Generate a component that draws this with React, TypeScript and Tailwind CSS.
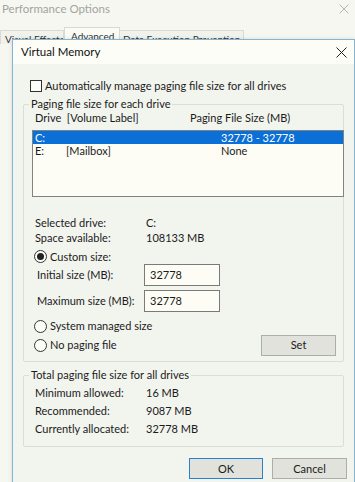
import { ReactNode } from "react";

const font = { fontFamily: 'Lato, "Noto Sans", "Liberation Sans", sans-serif' };

function Radio({ checked, label }: { checked?: boolean; label: string }) {
  return (
    <div className="flex items-center gap-[3px]">
      <span className="w-[13px] h-[13px] rounded-full border border-[#333] bg-[#fdfdf7] flex items-center justify-center">
        {checked && <span className="w-[7px] h-[7px] rounded-full bg-[#222]" />}
      </span>
      <span>{label}</span>
    </div>
  );
}

function Group({ title, children, className }: { title: string; children: ReactNode; className?: string }) {
  return (
    <fieldset className={`border border-[#dcddd6] rounded-[2px] ml-[10px] w-[321px] ${className ?? ""}`}>
      <legend className="ml-[5px] px-[2px] leading-[14px] h-[14px]">{title}</legend>
      {children}
    </fieldset>
  );
}

function InfoRow({ label, value, h = "h-[15px]" }: { label: string; value: string; h?: string }) {
  return (
    <div className={`flex items-center ${h}`}>
      <span className="w-[111px]">{label}</span>
      <span>{value}</span>
    </div>
  );
}

export default function App() {
  return (
    <div
      className="relative w-[355px] h-[482px] overflow-hidden bg-[#f6f7f1] text-[11px] leading-[14px] text-[#1b1b1b]"
      style={font}
    >
      {/* window behind */}
      <div className="flex items-center justify-between h-[17px] pl-[2px] pr-[6px] text-[11.5px] text-[#a3a4a0]">
        <span>Performance Options</span>
        <svg width="10" height="10" viewBox="0 0 10 10" className="mt-[1px]">
          <path d="M0.5 0.5 L9.5 9.5 M9.5 0.5 L0.5 9.5" stroke="#b5b6b2" strokeWidth="1" />
        </svg>
      </div>
      <div className="flex items-end h-[27px] text-[10px] text-[#333] whitespace-nowrap">
        <div className="h-[14px] w-[64px] border border-b-0 border-[#d9dad4] bg-[#f1f2ec] pl-[4px] pt-[1px] leading-[14px] overflow-hidden">
          Visual Effects
        </div>
        <div className="h-[17px] w-[56px] border border-b-0 border-[#d9dad4] bg-[#fbfbf6] pl-[6px] pt-[1px] leading-[14px] overflow-hidden">
          Advanced
        </div>
        <div className="h-[14px] w-[124px] border border-b-0 border-l-0 border-[#d9dad4] bg-[#f1f2ec] pl-[3px] pt-[1px] leading-[14px] overflow-hidden">
          Data Execution Prevention
        </div>
      </div>

      {/* Virtual Memory dialog */}
      <div className="absolute left-[12px] top-[39px] w-[343px] h-[450px] border border-[#86b5d3] bg-[#f2f4ee] shadow-[0_0_4px_rgba(0,0,0,0.12)]">
        <div className="flex items-center justify-between h-[24px] bg-[#fcfdf7] pl-[8px] pr-[7px] text-[11.5px] text-[#111]">
          <span>Virtual Memory</span>
          <svg width="11" height="11" viewBox="0 0 11 11">
            <path d="M0.5 0.5 L10.5 10.5 M10.5 0.5 L0.5 10.5" stroke="#222" strokeWidth="1" />
          </svg>
        </div>

        <div className="flex items-center gap-[3px] mt-[15px] ml-[17px] h-[14px]">
          <span className="w-[12px] h-[12px] border border-[#333] bg-[#fdfdf7]" />
          <span>Automatically manage paging file size for all drives</span>
        </div>

        <Group title="Paging file size for each drive" className="mt-[4px] pb-[6px]">
          <div className="flex items-center h-[14px] pl-[11px]">
            <span className="w-[155px]">Drive&nbsp; [Volume Label]</span>
            <span>Paging File Size (MB)</span>
          </div>
          <div className="mt-[5px] ml-[8px] -mr-[1px] h-[67px] border border-[#828282] bg-[#fdfdf6] leading-[13px]">
            <div className="flex items-center h-[13px] bg-[#0a6fd6] text-white pl-[2px]">
              <span className="w-[186px]">C:</span>
              <span>32778 - 32778</span>
            </div>
            <div className="flex items-center h-[13px] pl-[2px]">
              <span className="w-[31px]">E:</span>
              <span className="w-[155px]">[Mailbox]</span>
              <span>None</span>
            </div>
          </div>

          <div className="mt-[18px] pl-[11px]">
            <InfoRow label="Selected drive:" value="C:" />
            <InfoRow label="Space available:" value="108133 MB" />
          </div>

          <div className="mt-[5px] pl-[10px]">
            <div className="h-[13px] flex items-center">
              <Radio checked label="Custom size:" />
            </div>
            <div className="flex items-center mt-[1px] h-[22px] pl-[3px]">
              <span className="w-[107px]">Initial size (MB):</span>
              <div className="w-[76px] h-[22px] border border-[#7a7a7a] bg-[#fdfdf6] pl-[5px] flex items-center">32778</div>
            </div>
            <div className="flex items-center mt-[4px] h-[22px] pl-[3px]">
              <span className="w-[107px]">Maximum size (MB):</span>
              <div className="w-[76px] h-[22px] border border-[#7a7a7a] bg-[#fdfdf6] pl-[5px] flex items-center">32778</div>
            </div>
            <div className="mt-[7px] h-[14px] flex items-center">
              <Radio label="System managed size" />
            </div>
            <div className="mt-[2px] h-[20px] flex items-center justify-between pr-[7px]">
              <Radio label="No paging file" />
              <button className="w-[75px] h-[21px] border border-[#adadad] bg-[#e1e2dc]">Set</button>
            </div>
          </div>
        </Group>

        <Group title="Total paging file size for all drives" className="mt-[6px] pb-[8px]">
          <div className="mt-[2px] pl-[11px]">
            <InfoRow label="Minimum allowed:" value="16 MB" h="h-[18px]" />
            <InfoRow label="Recommended:" value="9087 MB" h="h-[18px]" />
            <InfoRow label="Currently allocated:" value="32778 MB" h="h-[18px]" />
          </div>
        </Group>

        <div className="flex justify-end gap-[9px] mt-[11px] pr-[7px]">
          <button className="w-[74px] h-[21px] border border-[#2a7fd0] bg-[#e1e2dc]">OK</button>
          <button className="w-[75px] h-[21px] border border-[#adadad] bg-[#e1e2dc]">Cancel</button>
        </div>
      </div>
    </div>
  );
}
